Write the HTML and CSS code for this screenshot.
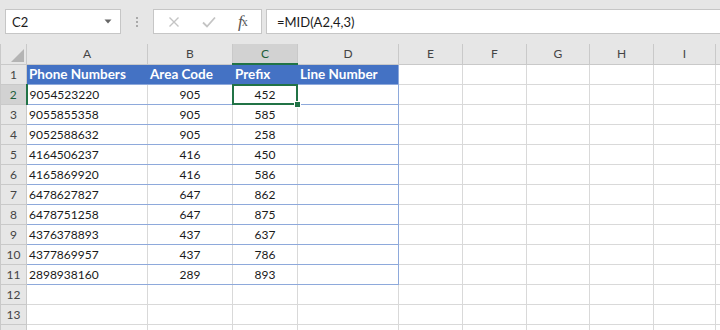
FILE: index.html
```html
<!DOCTYPE html>
<html lang="en">
<head>
    <meta charset="UTF-8">
    <title>MID formula - Excel</title>
    <link rel="stylesheet" href="styles.css">
</head>
<body>
    <div class="formula-bar">
        <div class="name-box">
            <span>C2</span>
            <svg class="drop" width="8" height="5" viewBox="0 0 8 5"><path d="M0.5 0.5h7L4 4.5z" fill="#666"/></svg>
        </div>
        <div class="grip"><i></i><i></i><i></i></div>
        <div class="fx-box">
            <svg width="12" height="12" viewBox="0 0 12 12"><path d="M1.5 1.5l9 9M10.5 1.5l-9 9" stroke="#c4c4c4" stroke-width="1.4" fill="none"/></svg>
            <svg width="14" height="12" viewBox="0 0 14 12"><path d="M1 6.5l4 4 8-9" stroke="#c4c4c4" stroke-width="1.8" fill="none"/></svg>
            <span class="fx"><i>f</i><sub>x</sub></span>
        </div>
        <div class="formula-input">=MID(A2,4,3)</div>
    </div>

    <table class="sheet">
        <colgroup>
            <col class="w-hdr"><col class="w-a"><col class="w-b"><col class="w-c"><col class="w-d">
            <col class="w-e"><col class="w-f"><col class="w-g"><col class="w-h"><col class="w-i"><col class="w-j">
        </colgroup>
        <tr class="col-heads">
            <th class="corner"><span class="tri"></span></th>
            <th>A</th><th>B</th><th class="sel">C</th><th>D</th><th>E</th><th>F</th><th>G</th><th>H</th><th>I</th><th></th>
        </tr>
        <tr>
            <th class="row-num">1</th>
            <td class="head">Phone Numbers</td><td class="head">Area Code</td><td class="head">Prefix</td><td class="head last">Line Number</td>
            <td></td><td></td><td></td><td></td><td></td><td></td>
        </tr>
        <tr>
            <th class="row-num sel">2</th>
            <td class="tb">9054523220</td><td class="tb num">905</td><td class="tb num active">452</td><td class="tb last"></td>
            <td></td><td></td><td></td><td></td><td></td><td></td>
        </tr>
        <tr>
            <th class="row-num">3</th>
            <td class="tb">9055855358</td><td class="tb num">905</td><td class="tb num">585</td><td class="tb last"></td>
            <td></td><td></td><td></td><td></td><td></td><td></td>
        </tr>
        <tr>
            <th class="row-num">4</th>
            <td class="tb">9052588632</td><td class="tb num">905</td><td class="tb num">258</td><td class="tb last"></td>
            <td></td><td></td><td></td><td></td><td></td><td></td>
        </tr>
        <tr>
            <th class="row-num">5</th>
            <td class="tb">4164506237</td><td class="tb num">416</td><td class="tb num">450</td><td class="tb last"></td>
            <td></td><td></td><td></td><td></td><td></td><td></td>
        </tr>
        <tr>
            <th class="row-num">6</th>
            <td class="tb">4165869920</td><td class="tb num">416</td><td class="tb num">586</td><td class="tb last"></td>
            <td></td><td></td><td></td><td></td><td></td><td></td>
        </tr>
        <tr>
            <th class="row-num">7</th>
            <td class="tb">6478627827</td><td class="tb num">647</td><td class="tb num">862</td><td class="tb last"></td>
            <td></td><td></td><td></td><td></td><td></td><td></td>
        </tr>
        <tr>
            <th class="row-num">8</th>
            <td class="tb">6478751258</td><td class="tb num">647</td><td class="tb num">875</td><td class="tb last"></td>
            <td></td><td></td><td></td><td></td><td></td><td></td>
        </tr>
        <tr>
            <th class="row-num">9</th>
            <td class="tb">4376378893</td><td class="tb num">437</td><td class="tb num">637</td><td class="tb last"></td>
            <td></td><td></td><td></td><td></td><td></td><td></td>
        </tr>
        <tr>
            <th class="row-num">10</th>
            <td class="tb">4377869957</td><td class="tb num">437</td><td class="tb num">786</td><td class="tb last"></td>
            <td></td><td></td><td></td><td></td><td></td><td></td>
        </tr>
        <tr>
            <th class="row-num">11</th>
            <td class="tb">2898938160</td><td class="tb num">289</td><td class="tb num">893</td><td class="tb last"></td>
            <td></td><td></td><td></td><td></td><td></td><td></td>
        </tr>
        <tr>
            <th class="row-num">12</th>
            <td></td><td></td><td></td><td></td><td></td><td></td><td></td><td></td><td></td><td></td>
        </tr>
        <tr>
            <th class="row-num">13</th>
            <td></td><td></td><td></td><td></td><td></td><td></td><td></td><td></td><td></td><td></td>
        </tr>
        <tr>
            <th class="row-num"></th>
            <td></td><td></td><td></td><td></td><td></td><td></td><td></td><td></td><td></td><td></td>
        </tr>
    </table>
</body>
</html>
```

FILE: styles.css
```css
:root {
    --chrome-bg: #e6e6e6;   /* ribbon / header grey */
    --hdr-line: #c9c9c9;    /* header separators */
    --grid-line: #d9d9d9;   /* sheet gridlines */
    --table-blue: #4472c4;  /* table header fill */
    --table-line: #8ea9db;  /* table row lines */
    --excel-green: #217346; /* selection */
}
body {
    margin: 0;
    overflow: hidden;
    background: #fff;
    font-family: Lato, "Liberation Sans", sans-serif;
    font-size: 12px;
    color: #1a1a1a;
}

/* formula bar */
.formula-bar {
    display: flex;
    align-items: center;
    height: 44px;
    padding-bottom: 1px;
    box-sizing: border-box;
    background: var(--chrome-bg);
}
.name-box,
.fx-box,
.formula-input {
    height: 25px;
    box-sizing: border-box;
    background: #fff;
    border: 1px solid #c6c6c6;
    display: flex;
    align-items: center;
}
.name-box {
    width: 116px;
    margin-left: 5px;
    padding: 0 8px 0 6px;
    justify-content: space-between;
    font-size: 13px;
}
.grip {
    width: 32px;
    display: flex;
    flex-direction: column;
    align-items: center;
    gap: 2px;
}
.grip i {
    width: 2px;
    height: 2px;
    background: #a9a9a9;
}
.fx-box {
    width: 109px;
    padding: 0 0 0 14px;
}
.fx-box svg {
    margin-right: 22px;
}
.fx {
    font-family: "Liberation Serif", serif;
    font-size: 17px;
    color: #555;
    line-height: 1;
}
.fx sub {
    font-size: 12px;
    vertical-align: 1px;
    margin-left: -1px;
}
.formula-input {
    flex: 1;
    margin-left: 4px;
    border-right: none;
    padding-left: 10px;
    font-size: 13px;
}

/* sheet grid */
.sheet {
    border-collapse: collapse;
    table-layout: fixed;
    width: 775px;
}
.w-hdr { width: 26px; }
.w-a { width: 121px; }
.w-b { width: 85px; }
.w-c { width: 65px; }
.w-d { width: 101px; }
.w-e { width: 64px; }
.w-f { width: 64px; }
.w-g { width: 63px; }
.w-h { width: 64px; }
.w-i { width: 62px; }
.w-j { width: 60px; }

.sheet tr {
    height: 20px;
}
.sheet th,
.sheet td {
    padding: 0 2px;
    height: 19px;
    line-height: 19px;
    white-space: nowrap;
    overflow: hidden;
}
.sheet td {
    border: 1px solid var(--grid-line);
}
.sheet th {
    background: var(--chrome-bg);
    font-weight: normal;
    color: #444;
    border: 1px solid var(--hdr-line);
    text-align: center;
}
.col-heads th {
    border-top: none;
}
.col-heads th.sel {
    background: #d2d2d2;
    color: #1e5e3a;
    border-bottom: 2px solid var(--excel-green);
}
.corner {
    position: relative;
}
.tri {
    position: absolute;
    right: 2px;
    bottom: 2px;
    width: 0;
    height: 0;
    border-left: 13px solid transparent;
    border-bottom: 13px solid #b4b4b4;
}
.row-num {
    border-left: none;
    padding: 0;
}
.row-num.sel {
    background: #d2d2d2;
    color: #1e5e3a;
    border-right: 2px solid var(--excel-green);
}

/* formatted table A1:D11 */
.sheet td.head {
    background: var(--table-blue);
    color: #fff;
    font-weight: bold;
    font-size: 13.5px;
    border-color: var(--table-blue);
    border-bottom-color: var(--table-line);
}
.sheet td.tb {
    border-bottom-color: var(--table-line);
}
.sheet td.last {
    border-right-color: var(--table-line);
}
.sheet td.num {
    text-align: center;
}
.sheet td.active {
    position: relative;
    overflow: visible;
}
.active::before {
    content: "";
    position: absolute;
    left: -1px;
    top: -1px;
    right: -1px;
    bottom: -1px;
    border: 2px solid var(--excel-green);
    z-index: 2;
}
.active::after {
    content: "";
    position: absolute;
    right: -4px;
    bottom: -4px;
    width: 5px;
    height: 5px;
    background: var(--excel-green);
    border: 1px solid #fff;
    z-index: 3;
}
```
